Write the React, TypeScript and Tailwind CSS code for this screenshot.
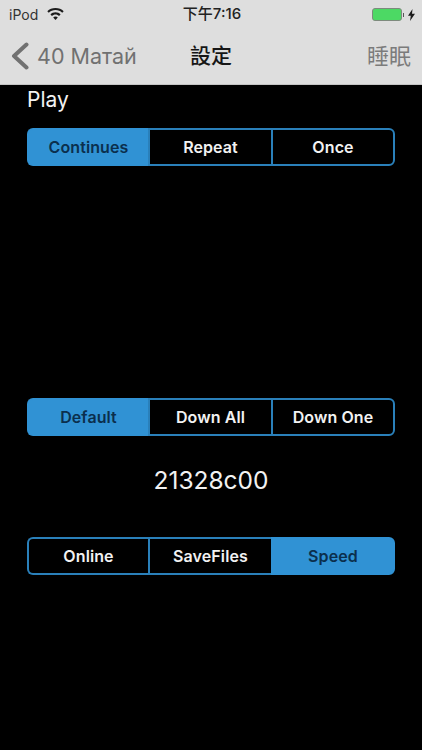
function Segmented({ items, active }: { items: string[]; active: number }) {
  return (
    <div className="mx-[27px] grid h-[38px] grid-cols-[121px_123px_1fr]">
      {items.map((item, i) => (
        <div
          key={item}
          className={`flex items-center justify-center border-y-2 text-[16px] font-semibold tracking-[0.1px] ${
            i === 0 ? 'rounded-l-[6px] border-l-2' : i === 1 ? 'border-l-2' : 'rounded-r-[6px] border-x-2'
          } ${
            i === active
              ? 'border-[#3092d4] bg-[#3092d4] text-[#0b2f4d]'
              : 'border-[#2a80ba] bg-black text-[#f2f2f2]'
          }`}
        >
          {item}
        </div>
      ))}
    </div>
  )
}

function Wifi() {
  return (
    <svg width="17" height="13" viewBox="0 0 17 13" fill="#1c1c1c">
      <path d="M8.5 0C5.3 0 2.4 1.2.3 3.2l1.5 1.6C3.5 3.1 5.900 2.100 8.500 2.100s5 1 6.700 2.700l1.500-1.600C14.600 1.200 11.700 0 8.500 0z" />
      <path d="M8.500 4.300c-2 0-3.800.8-5.100 2l1.500 1.600c.9-.9 2.200-1.500 3.600-1.500s2.700.6 3.600 1.500l1.500-1.600c-1.300-1.200-3.100-2-5.100-2z" />
      <path d="M8.500 8.500c-.9 0-1.700.4-2.300.9l2.300 2.600 2.300-2.600c-.6-.5-1.400-.9-2.300-.9z" />
    </svg>
  )
}

function Battery() {
  return (
    <div className="flex items-center">
      <div className="h-[13px] w-[30px] rounded-[3px] border border-[#7d8a7d] bg-[#4cd964]" />
      <div className="ml-[1px] h-[4px] w-[1px] bg-[#555]" />
      <svg className="ml-[4px]" width="7" height="12" viewBox="0 0 7 12" fill="#1c1c1c">
        <path d="M4.500 0 0 6.800h2.800L2 12l5-7.200H4z" />
      </svg>
    </div>
  )
}

export default function App() {
  return (
    <div className="flex h-[750px] w-[422px] flex-col overflow-hidden bg-black font-['Inter','Noto_Sans_CJK_TC',sans-serif]">
      <div className="h-[85px] shrink-0 border-b border-[#c4c4c4] bg-[#dedede]">
        <div className="flex h-[28px] items-center justify-between pl-[9px] pr-[7px] pt-[1px] text-[#222]">
          <div className="flex w-[150px] items-center gap-[9px] text-[14px] text-[#333]">
            <span>iPod</span>
            <Wifi />
          </div>
          <div className="text-[15px] font-medium">下午7:16</div>
          <div className="flex w-[150px] justify-end">
            <Battery />
          </div>
        </div>
        <div className="flex h-[56px] items-center justify-between px-[11px]">
          <div className="flex w-[139px] items-center text-[#717171]">
            <svg className="shrink-0" width="18" height="28" viewBox="0 0 18 28" fill="none" stroke="currentColor" strokeWidth="4" strokeLinecap="round" strokeLinejoin="round">
              <path d="M15.500 2.500 3 14l12.500 11.500" />
            </svg>
            <span className="ml-[8px] whitespace-nowrap text-[21.500px]">40 Матай</span>
          </div>
          <div className="text-[21px] font-medium text-[#161616]">設定</div>
          <div className="w-[139px] text-right text-[22px] text-[#7b7b7b]">睡眠</div>
        </div>
      </div>

      <div className="pl-[27px] pt-[1px] text-[21px] leading-[28px] text-[#f2f2f2]">Play</div>
      <div className="pt-[14px]">
        <Segmented items={['Continues', 'Repeat', 'Once']} active={0} />
      </div>
      <div className="pt-[232px]">
        <Segmented items={['Default', 'Down All', 'Down One']} active={0} />
      </div>
      <div className="pt-[28px] text-center text-[24.500px] leading-[32px] text-[#f2f2f2]">21328c00</div>
      <div className="pt-[41px]">
        <Segmented items={['Online', 'SaveFiles', 'Speed']} active={2} />
      </div>
    </div>
  )
}
